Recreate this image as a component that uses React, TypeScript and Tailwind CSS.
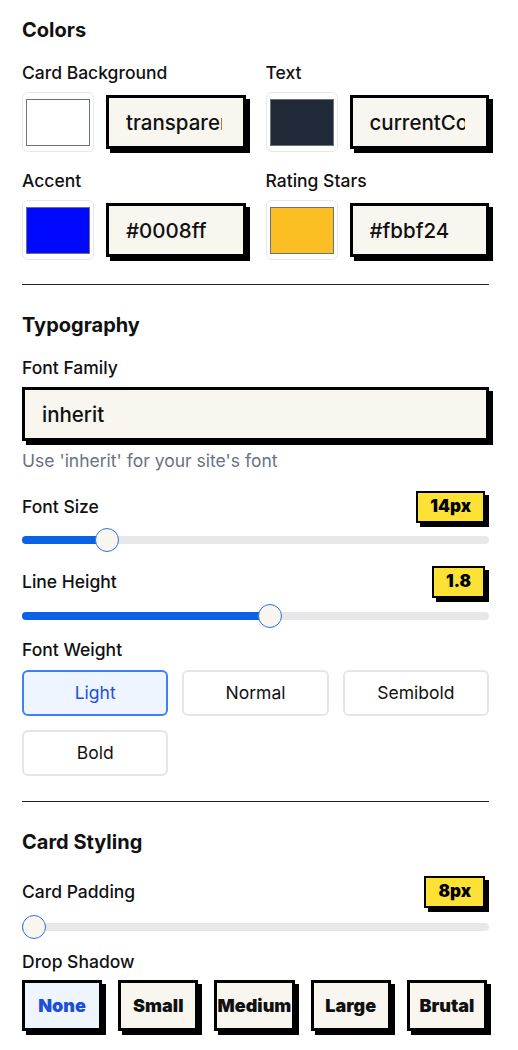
import React from "react";

const FONT = { fontFamily: "Inter, 'Noto Sans', sans-serif" };

function Swatch({ color }: { color: string }) {
  return (
    <div className="w-[72px] h-[60px] shrink-0 rounded-md border border-gray-200 bg-white flex items-center justify-center">
      <div className="w-[64px] h-[47px] border border-gray-500" style={{ background: color }} />
    </div>
  );
}

function TextBox({ value }: { value: string }) {
  return (
    <input
      readOnly
      value={value}
      className="min-w-0 flex-1 h-[54px] border-[3px] border-black bg-[#f8f6ef] pl-[17px] pr-[21px] text-[20.5px] font-medium text-[#111] shadow-[4px_4px_0_0_#000] outline-none"
      style={FONT}
    />
  );
}

function ColorField({ label, color, value }: { label: string; color: string; value: string }) {
  return (
    <div className="flex flex-col">
      <div className="text-[17.5px] leading-6 font-medium text-[#111]">{label}</div>
      <div className="mt-[7px] flex items-center gap-3">
        <Swatch color={color} />
        <TextBox value={value} />
      </div>
    </div>
  );
}

function Badge({ children }: { children: React.ReactNode }) {
  return (
    <div className="mr-1 h-8 flex items-center border-2 border-black bg-[#fde235] px-3 text-[17px] font-black text-black shadow-[4px_4px_0_0_#000]">
      {children}
    </div>
  );
}

function Slider({ frac }: { frac: number }) {
  const center = `calc(12px + (100% - 24px) * ${frac})`;
  return (
    <div className="relative h-6 w-full">
      <div className="absolute left-0 right-0 top-2 h-2 rounded-full bg-[#e8e8eb]" />
      <div className="absolute left-0 top-2 h-2 rounded-full bg-[#0a63e6]" style={{ width: center }} />
      <div
        className="absolute top-0 h-6 w-6 -translate-x-1/2 rounded-full border border-[#2f72e0] bg-[#f8f6ef]"
        style={{ left: center }}
      />
    </div>
  );
}

function WeightBtn({ label, active }: { label: string; active?: boolean }) {
  return (
    <div
      className={
        active
          ? "h-[46px] rounded-md border-2 border-[#3b82f6] bg-[#eef5ff] flex items-center justify-center text-[17.5px] text-[#1d4ed8]"
          : "h-[46px] rounded-md border-2 border-[#e5e5e7] bg-white flex items-center justify-center text-[17.5px] text-[#111]"
      }
    >
      {label}
    </div>
  );
}

function ShadowBtn({ label, active }: { label: string; active?: boolean }) {
  return (
    <div
      className={
        active
          ? "h-[51px] min-w-0 border-[3px] border-black bg-[#eef5ff] shadow-[4px_4px_0_0_#000] flex items-center justify-center whitespace-nowrap text-[18px] font-black text-[#1d4ed8]"
          : "h-[51px] min-w-0 border-[3px] border-black bg-[#f8f6ef] shadow-[4px_4px_0_0_#000] flex items-center justify-center whitespace-nowrap text-[18px] font-black text-[#111]"
      }
    >
      {label}
    </div>
  );
}

export default function App() {
  return (
    <div className="w-[518px] min-h-[1050px] bg-white text-[#111]" style={FONT}>
      <div className="w-[489px] pl-[22px]">
        {/* Colors */}
        <section className="pt-4 pb-6 border-b border-[#222]">
          <h2 className="text-xl leading-7 font-bold">Colors</h2>
          <div className="mt-[17px] grid grid-cols-2 gap-x-5 gap-y-[17px]">
            <ColorField label="Card Background" color="#ffffff" value="transparent" />
            <ColorField label="Text" color="#1f2937" value="currentColor" />
            <ColorField label="Accent" color="#0008ff" value="#0008ff" />
            <ColorField label="Rating Stars" color="#fbbf24" value="#fbbf24" />
          </div>
        </section>

        {/* Typography */}
        <section className="pt-[26px] pb-[25px] border-b border-[#222]">
          <h2 className="text-xl leading-7 font-bold">Typography</h2>
          <div className="mt-[17px] text-[17.5px] leading-6 font-medium">Font Family</div>
          <div className="mt-[7px] flex">
            <TextBox value="inherit" />
          </div>
          <div className="mt-2 text-[17.5px] leading-6 text-[#6b7280]">Use 'inherit' for your site's font</div>

          <div className="mt-[18px] flex items-center justify-between">
            <div className="text-[17.5px] leading-6 font-medium">Font Size</div>
            <Badge>14px</Badge>
          </div>
          <div className="mt-[5px]">
            <Slider frac={0.165} />
          </div>

          <div className="mt-[14px] flex items-center justify-between">
            <div className="text-[17.5px] leading-6 font-medium">Line Height</div>
            <Badge>1.8</Badge>
          </div>
          <div className="mt-[6px]">
            <Slider frac={0.533} />
          </div>

          <div className="mt-[10px] text-[17.5px] leading-6 font-medium">Font Weight</div>
          <div className="mt-2 grid grid-cols-3 gap-[14px]">
            <WeightBtn label="Light" active />
            <WeightBtn label="Normal" />
            <WeightBtn label="Semibold" />
            <WeightBtn label="Bold" />
          </div>
        </section>

        {/* Card Styling */}
        <section className="pt-[26px]">
          <h2 className="text-xl leading-7 font-bold">Card Styling</h2>
          <div className="mt-5 flex items-center justify-between">
            <div className="text-[17.5px] leading-6 font-medium">Card Padding</div>
            <Badge>8px</Badge>
          </div>
          <div className="mt-[7px]">
            <Slider frac={0} />
          </div>
          <div className="mt-[11px] text-[17.5px] leading-6 font-medium">Drop Shadow</div>
          <div className="mt-[6px] grid grid-cols-5 gap-4 pr-0.5">
            <ShadowBtn label="None" active />
            <ShadowBtn label="Small" />
            <ShadowBtn label="Medium" />
            <ShadowBtn label="Large" />
            <ShadowBtn label="Brutal" />
          </div>
        </section>
      </div>
    </div>
  );
}
